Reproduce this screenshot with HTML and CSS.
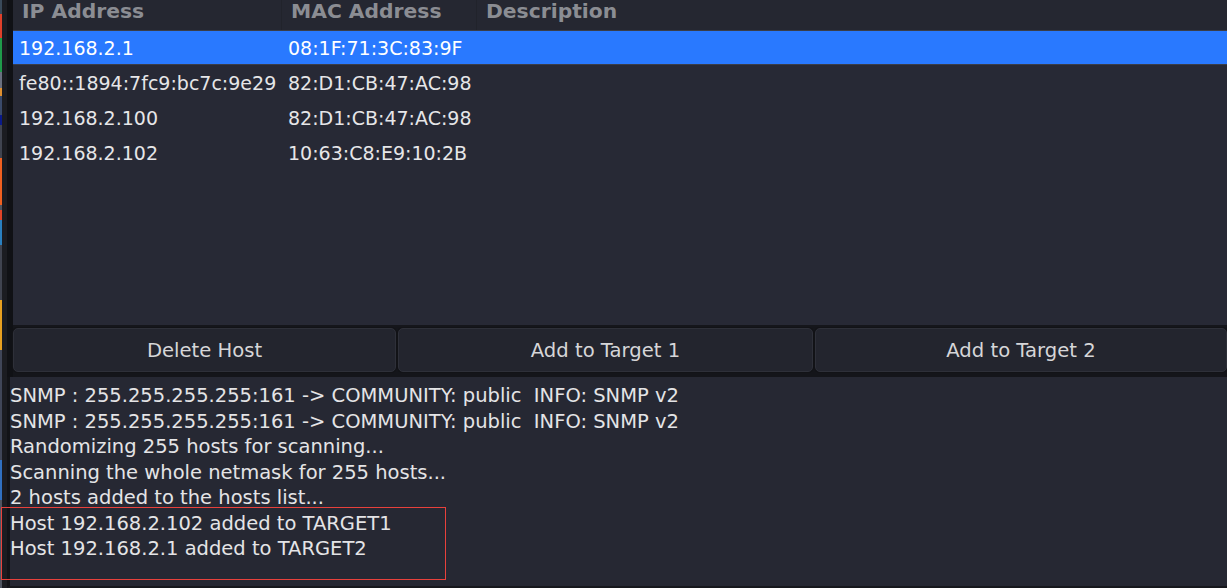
FILE: index.html
```html
<!DOCTYPE html>
<html>
<head>
<meta charset="utf-8">
<link rel="stylesheet" href="styles.css">
</head>
<body>
<div class="app">
  <div class="edge"></div>
  <div class="frame">
    <div class="upper">
      <div class="list">
        <div class="thead">
          <div class="th col-ip">IP Address</div>
          <div class="th col-mac">MAC Address</div>
          <div class="th col-desc">Description</div>
        </div>
        <div class="row selected">
          <div class="td col-ip">192.168.2.1</div>
          <div class="td col-mac">08:1F:71:3C:83:9F</div>
          <div class="td col-desc"></div>
        </div>
        <div class="row">
          <div class="td col-ip">fe80::1894:7fc9:bc7c:9e29</div>
          <div class="td col-mac">82:D1:CB:47:AC:98</div>
          <div class="td col-desc"></div>
        </div>
        <div class="row">
          <div class="td col-ip">192.168.2.100</div>
          <div class="td col-mac">82:D1:CB:47:AC:98</div>
          <div class="td col-desc"></div>
        </div>
        <div class="row">
          <div class="td col-ip">192.168.2.102</div>
          <div class="td col-mac">10:63:C8:E9:10:2B</div>
          <div class="td col-desc"></div>
        </div>
      </div>
      <div class="buttons">
        <button class="btn">Delete Host</button>
        <button class="btn">Add to Target 1</button>
        <button class="btn">Add to Target 2</button>
      </div>
    </div>
    <div class="log">
      <div class="line">SNMP : 255.255.255.255:161 -&gt; COMMUNITY: public&nbsp; INFO: SNMP v2</div>
      <div class="line">SNMP : 255.255.255.255:161 -&gt; COMMUNITY: public&nbsp; INFO: SNMP v2</div>
      <div class="line">Randomizing 255 hosts for scanning...</div>
      <div class="line">Scanning the whole netmask for 255 hosts...</div>
      <div class="line">2 hosts added to the hosts list...</div>
      <div class="line">Host 192.168.2.102 added to TARGET1</div>
      <div class="line">Host 192.168.2.1 added to TARGET2</div>
    </div>
  </div>
  <div class="highlight"></div>
</div>
</body>
</html>
```

FILE: styles.css
```css
* { box-sizing: border-box; }
html, body {
  margin: 0;
  padding: 0;
  width: 1227px;
  height: 588px;
  overflow: hidden;
  background: #262833;
  font-family: "DejaVu Sans", "Liberation Sans", sans-serif;
}
.app {
  position: relative;
  display: flex;
  width: 1227px;
  height: 588px;
}
.edge {
  width: 2px;
  flex: none;
  background: linear-gradient(to bottom,
    #3a4a5a 0px, #3a4a5a 14px,
    #e0402a 14px, #e0402a 38px,
    #1f9a4a 38px, #1f9a4a 72px,
    #6a7080 72px, #6a7080 88px,
    #e09030 88px, #e09030 96px,
    #3a4a6a 96px, #3a4a6a 115px,
    #0a1a8a 115px, #0a1a8a 125px,
    #404450 125px, #404450 158px,
    #f06020 158px, #f06020 205px,
    #505560 205px, #505560 210px,
    #e04428 210px, #e04428 220px,
    #2a80c0 220px, #2a80c0 245px,
    #404450 245px, #404450 300px,
    #e8a020 300px, #e8a020 350px,
    #404658 350px, #404658 460px,
    #3070c0 460px, #3070c0 500px,
    #505560 500px);
}
.frame {
  flex: 1;
  display: flex;
  flex-direction: column;
  background: #1b1c21;
  border-left: 5px solid #1b1c21;
  min-width: 0;
}
.upper {
  flex: none;
  border-left: 6px solid #101115;
  background: #14151a;
}
.list {
  height: 327px;
  background: #272935;
  border-bottom: 2px solid #15161b;
}
.thead {
  display: flex;
  height: 31px;
  background: #252731;
  border-bottom: 1px solid #3a3d48;
}
.th {
  font-weight: bold;
  font-size: 20.3px;
  color: #8b8d93;
  padding: 0 0 0 9px;
  line-height: 23px;
  border-right: 1px solid #21232b;
  white-space: nowrap;
  overflow: hidden;
}
.col-ip { width: 269px; flex: none; }
.col-mac { width: 195px; flex: none; }
.col-desc { flex: 1; border-right: none; }
.row {
  display: flex;
  height: 35px;
  align-items: center;
  color: #e6e6e8;
  font-size: 19px;
}
.row.selected {
  background: #2979ff;
  color: #ffffff;
  height: 34px;
  border-bottom: 1px solid #3a3d48;
}
.td {
  padding-left: 6px;
  white-space: nowrap;
  overflow: hidden;
}
.buttons {
  display: grid;
  grid-template-columns: 383px 415px 1fr;
  gap: 2px;
  height: 50px;
  padding: 1px 0 5px 0;
}
.btn {
  font-family: inherit;
  font-size: 19.6px;
  color: #d6d6d8;
  background: #23252e;
  border: 1px solid #2e3039;
  border-radius: 5px;
  padding: 0;
  margin: 0;
  box-shadow: 0 0 0 1px #121317;
}
.log {
  flex: 1;
  background: #262833;
  padding: 6px 0 0 0;
  border-left: 3px solid #121317;
  color: #e4e4e6;
  font-size: 19.5px;
  line-height: 25.5px;
  border-bottom: 2px solid #17181d;
}
.line { white-space: nowrap; }
.highlight {
  position: absolute;
  left: 1px;
  top: 507px;
  width: 445px;
  height: 73px;
  box-shadow: inset 0 0 0 1px #e8413c;
}
```
